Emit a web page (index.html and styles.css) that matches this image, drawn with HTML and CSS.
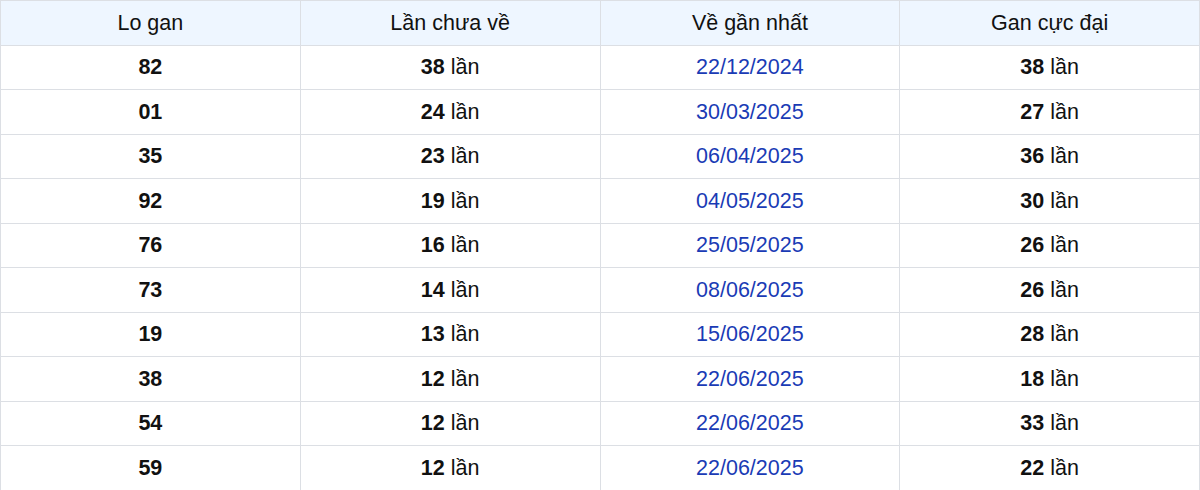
FILE: index.html
```html
<!DOCTYPE html>
<html lang="vi">
<head>
<meta charset="utf-8">
<link rel="stylesheet" href="styles.css">
</head>
<body>
<table class="gan">
  <thead>
    <tr><th>Lo gan</th><th>Lần chưa về</th><th>Về gần nhất</th><th>Gan cực đại</th></tr>
  </thead>
  <tbody>
    <tr><td><b>82</b></td><td><b>38</b> lần</td><td class="date">22/12/2024</td><td><b>38</b> lần</td></tr>
    <tr><td><b>01</b></td><td><b>24</b> lần</td><td class="date">30/03/2025</td><td><b>27</b> lần</td></tr>
    <tr><td><b>35</b></td><td><b>23</b> lần</td><td class="date">06/04/2025</td><td><b>36</b> lần</td></tr>
    <tr><td><b>92</b></td><td><b>19</b> lần</td><td class="date">04/05/2025</td><td><b>30</b> lần</td></tr>
    <tr><td><b>76</b></td><td><b>16</b> lần</td><td class="date">25/05/2025</td><td><b>26</b> lần</td></tr>
    <tr><td><b>73</b></td><td><b>14</b> lần</td><td class="date">08/06/2025</td><td><b>26</b> lần</td></tr>
    <tr><td><b>19</b></td><td><b>13</b> lần</td><td class="date">15/06/2025</td><td><b>28</b> lần</td></tr>
    <tr><td><b>38</b></td><td><b>12</b> lần</td><td class="date">22/06/2025</td><td><b>18</b> lần</td></tr>
    <tr><td><b>54</b></td><td><b>12</b> lần</td><td class="date">22/06/2025</td><td><b>33</b> lần</td></tr>
    <tr><td><b>59</b></td><td><b>12</b> lần</td><td class="date">22/06/2025</td><td><b>22</b> lần</td></tr>
  </tbody>
</table>
</body>
</html>
```
FILE: styles.css
```css
html, body {
  margin: 0;
  padding: 0;
  background: #fff;
}
body {
  font-family: "Liberation Sans", Arial, sans-serif;
  color: #111;
}
.gan {
  width: 1200px;
  border-collapse: collapse;
  table-layout: fixed;
  font-size: 21.5px;
}
.gan th, .gan td {
  border: 1px solid #dcdfe4;
  text-align: center;
  padding: 0;
  height: 43.5px;
  line-height: 24px;
}
.gan th {
  background: #eef6ff;
  font-weight: 400;
}
.gan td b {
  font-weight: 700;
}
.gan td.date {
  color: #1a3bb5;
}
```
